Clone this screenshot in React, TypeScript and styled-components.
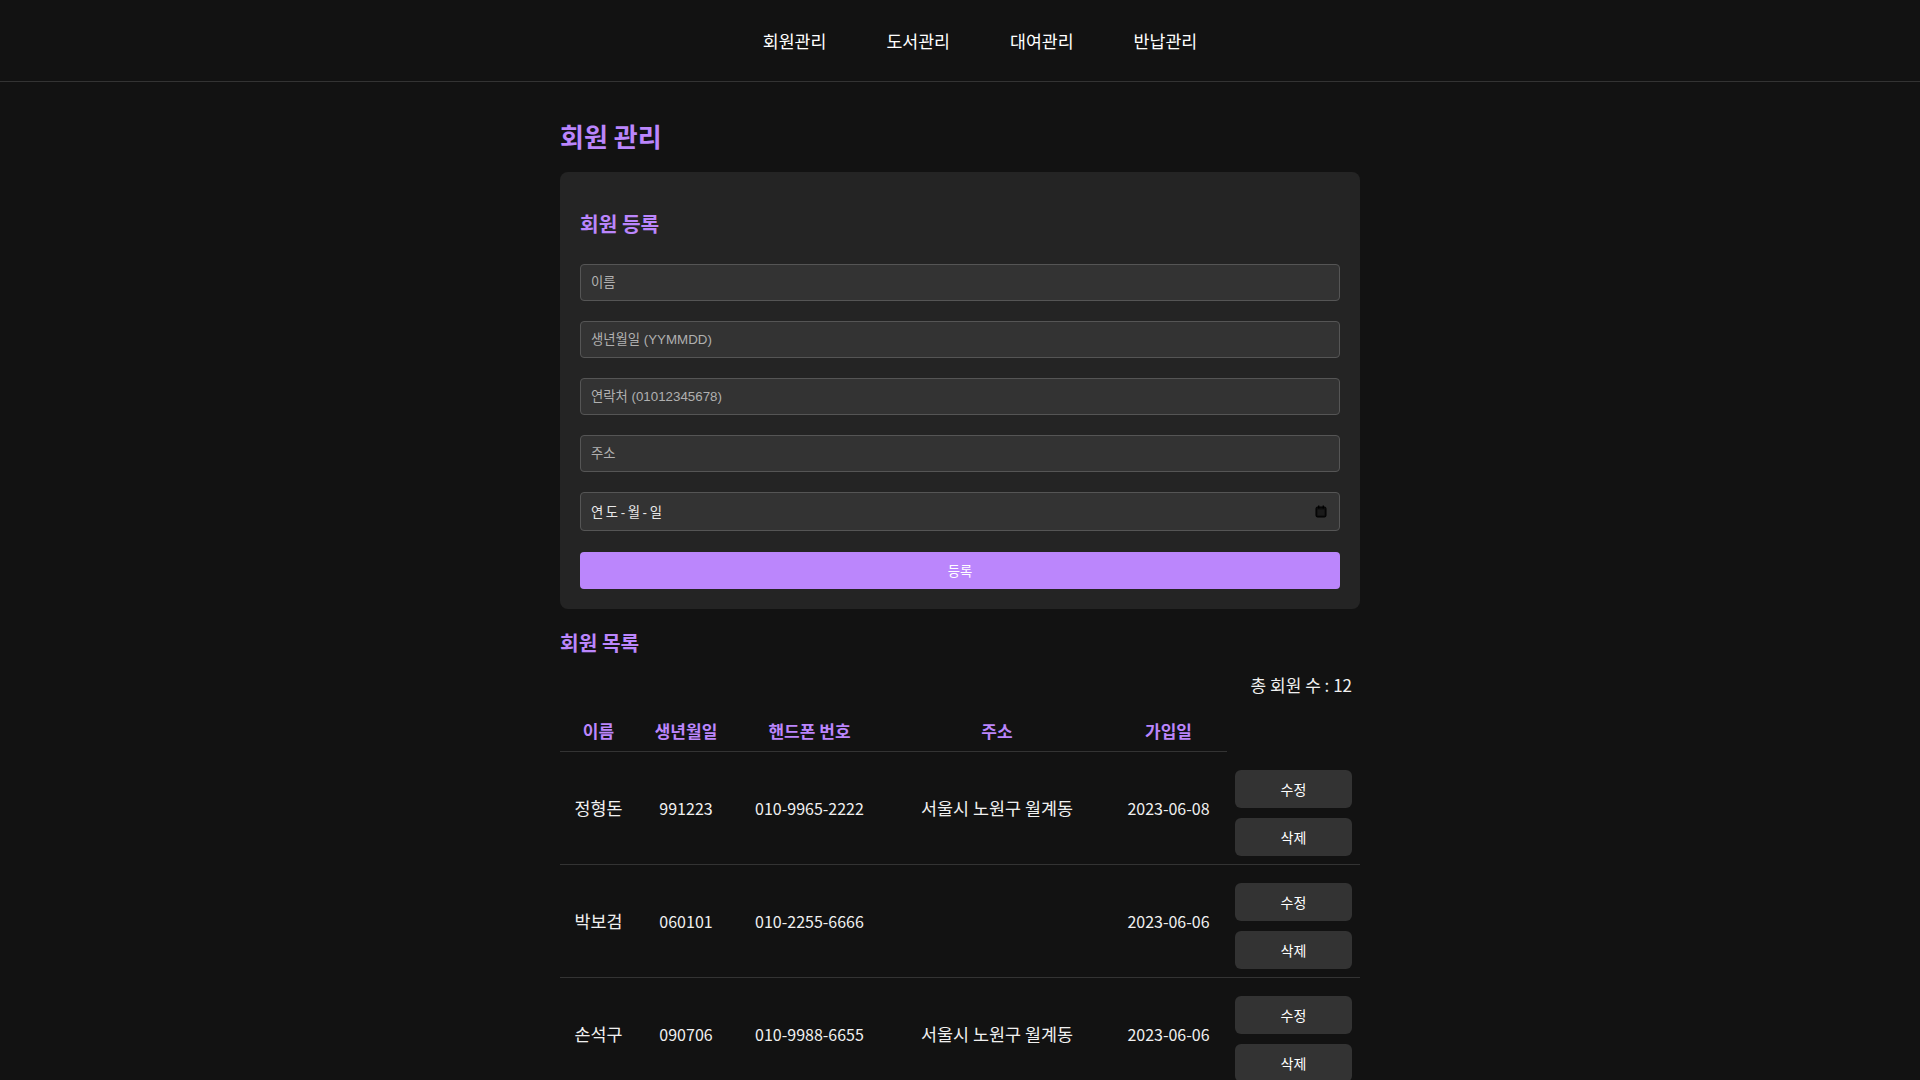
import React from "react";
import styled, { createGlobalStyle } from "styled-components";

const GlobalStyle = createGlobalStyle`
  html, body {
    margin: 0;
    padding: 0;
    background: #121212;
    color: #ffffff;
    font-family: "Noto Sans CJK KR", "Noto Sans", "Liberation Sans", sans-serif;
  }
  * { box-sizing: border-box; }
`;

const NavBar = styled.nav`
  height: 82px;
  border-bottom: 1px solid #333333;
  display: flex;
  align-items: center;
  justify-content: center;
`;

const NavList = styled.ul`
  list-style: none;
  margin: 0;
  padding: 0 0 0 40px;
  display: flex;
  gap: 60px;
`;

const NavItem = styled.li`
  font-size: 17.3px;
  line-height: 22px;
  color: #ffffff;
  cursor: pointer;
`;

const Main = styled.main`
  width: 800px;
  margin: 0 auto;
  padding-top: 39px;
`;

const PageTitle = styled.h2`
  margin: 0 0 21px;
  font-size: 26px;
  line-height: 30px;
  font-weight: 700;
  color: #bb86fc;
`;

const Card = styled.section`
  background: #242424;
  border-radius: 8px;
  padding: 20px;
`;

const SectionTitle = styled.h3<{ $mt: number; $mb: number }>`
  margin: ${(p) => p.$mt}px 0 ${(p) => p.$mb}px;
  font-size: 20.3px;
  line-height: 24px;
  font-weight: 700;
  color: #bb86fc;
`;

const Form = styled.form`
  display: flex;
  flex-direction: column;
  gap: 20px;
`;

const Input = styled.input`
  width: 100%;
  height: 37px;
  padding: 0 10px;
  border: 1px solid #555555;
  border-radius: 4px;
  background: #333333;
  color: #eeeeee;
  font-family: "Liberation Sans", "Noto Sans CJK KR", sans-serif;
  font-size: 13.33px;
  outline: none;
  &::placeholder {
    color: #b0b0b0;
  }
`;

const DateField = styled.div`
  width: 100%;
  height: 39px;
  padding: 0 12px 0 10px;
  border: 1px solid #555555;
  border-radius: 4px;
  background: #333333;
  display: flex;
  align-items: center;
  justify-content: space-between;
`;

const DateText = styled.span`
  color: #e8e8e8;
  font-family: "Liberation Sans", "Noto Sans CJK KR", sans-serif;
  font-size: 13.33px;
  letter-spacing: 2.6px;
`;

const SubmitButton = styled.button`
  width: 100%;
  height: 37px;
  margin-top: 1px;
  border: none;
  border-radius: 4px;
  background: #bb86fc;
  color: #ffffff;
  font-family: "Noto Sans CJK KR", "Liberation Sans", sans-serif;
  font-size: 13.33px;
  cursor: pointer;
`;

const CountLine = styled.div`
  text-align: right;
  padding-right: 8px;
  font-size: 17px;
  line-height: 24px;
  color: #f0f0f0;
  margin-bottom: 14px;
`;

const Table = styled.table`
  width: 100%;
  table-layout: fixed;
  border-collapse: collapse;
`;

const HeadCell = styled.th`
  padding: 8px 0;
  font-size: 17px;
  line-height: 24px;
  font-weight: 700;
  color: #bb86fc;
  text-align: center;
  border-bottom: 1px solid #333333;
`;

const Cell = styled.td<{ $hangul?: boolean }>`
  padding: 0;
  font-size: ${(p) => (p.$hangul ? "17.4px" : "16px")};
  line-height: 24px;
  color: #f0f0f0;
  text-align: center;
  vertical-align: middle;
  border-bottom: 1px solid #333333;
`;

const ActionCell = styled.td`
  padding: 18px 8px 8px;
  border-bottom: 1px solid #333333;
  vertical-align: middle;
`;

const ActionStack = styled.div`
  display: flex;
  flex-direction: column;
  gap: 10px;
`;

const ActionButton = styled.button`
  width: 100%;
  height: 38px;
  border: none;
  border-radius: 6px;
  background: #333333;
  color: #ffffff;
  font-family: "Noto Sans CJK KR", "Liberation Sans", sans-serif;
  font-size: 14px;
  cursor: pointer;
`;

const CalendarIcon = () => (
  <svg width="12" height="13" viewBox="0 0 12 13" aria-hidden="true">
    <rect x="1" y="2" width="10" height="10" rx="1.5" fill="#0d0d0d" stroke="#000" strokeWidth="1" />
    <rect x="2.5" y="4.5" width="7" height="6" fill="#1a1a1a" />
    <rect x="3" y="0.5" width="1.4" height="3" fill="#000" />
    <rect x="7.6" y="0.5" width="1.4" height="3" fill="#000" />
  </svg>
);

type Member = {
  name: string;
  birth: string;
  phone: string;
  address: string;
  joined: string;
};

const members: Member[] = [
  { name: "정형돈", birth: "991223", phone: "010-9965-2222", address: "서울시 노원구 월계동", joined: "2023-06-08" },
  { name: "박보검", birth: "060101", phone: "010-2255-6666", address: "", joined: "2023-06-06" },
  { name: "손석구", birth: "090706", phone: "010-9988-6655", address: "서울시 노원구 월계동", joined: "2023-06-06" },
];

const colWidths = [77, 98, 149, 226, 117, 133];

export default function App() {
  return (
    <>
      <GlobalStyle />
      <NavBar>
        <NavList>
          <NavItem>회원관리</NavItem>
          <NavItem>도서관리</NavItem>
          <NavItem>대여관리</NavItem>
          <NavItem>반납관리</NavItem>
        </NavList>
      </NavBar>
      <Main>
        <PageTitle>회원 관리</PageTitle>
        <Card>
          <SectionTitle $mt={19} $mb={29}>회원 등록</SectionTitle>
          <Form onSubmit={(e) => e.preventDefault()}>
            <Input placeholder="이름" />
            <Input placeholder="생년월일 (YYMMDD)" />
            <Input placeholder="연락처 (01012345678)" />
            <Input placeholder="주소" />
            <DateField>
              <DateText>연도-월-일</DateText>
              <CalendarIcon />
            </DateField>
            <SubmitButton type="submit">등록</SubmitButton>
          </Form>
        </Card>
        <SectionTitle $mt={21} $mb={19}>회원 목록</SectionTitle>
        <CountLine>총 회원 수 : 12</CountLine>
        <Table>
          <colgroup>
            {colWidths.map((w, i) => (
              <col key={i} style={{ width: w }} />
            ))}
          </colgroup>
          <thead>
            <tr>
              <HeadCell>이름</HeadCell>
              <HeadCell>생년월일</HeadCell>
              <HeadCell>핸드폰 번호</HeadCell>
              <HeadCell>주소</HeadCell>
              <HeadCell>가입일</HeadCell>
            </tr>
          </thead>
          <tbody>
            {members.map((m) => (
              <tr key={m.name}>
                <Cell $hangul>{m.name}</Cell>
                <Cell>{m.birth}</Cell>
                <Cell>{m.phone}</Cell>
                <Cell $hangul>{m.address}</Cell>
                <Cell>{m.joined}</Cell>
                <ActionCell>
                  <ActionStack>
                    <ActionButton>수정</ActionButton>
                    <ActionButton>삭제</ActionButton>
                  </ActionStack>
                </ActionCell>
              </tr>
            ))}
          </tbody>
        </Table>
      </Main>
    </>
  );
}
